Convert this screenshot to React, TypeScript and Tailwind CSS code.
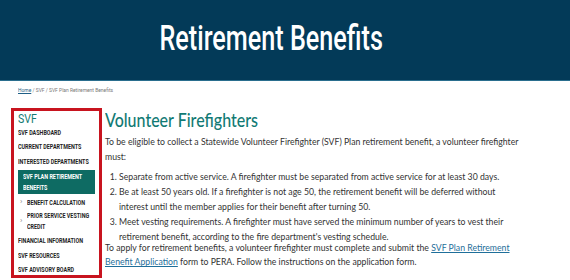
import React from "react";

function C({ children, s = "scale-x-[0.74]" }: { children: React.ReactNode; s?: string }) {
  return <span className={`inline-block origin-left whitespace-nowrap ${s}`}>{children}</span>;
}

function Chevron() {
  return <span className="text-[#8a8a8a] text-[8px] w-[7px] shrink-0 font-normal leading-none">›</span>;
}

export default function App() {
  return (
    <div className="w-[570px] h-[280px] overflow-hidden bg-white" style={{ fontFamily: 'Lato, "Liberation Sans", sans-serif' }}>
      <header className="h-[81px] bg-[#033a58] border-b border-[#2a6e8e] flex items-center justify-center">
        <h1 className="text-white text-[35px] leading-none font-medium scale-x-[0.72] -mt-[3px] ml-[-28px] whitespace-nowrap" style={{ fontFamily: 'Roboto, "Liberation Sans", sans-serif' }}>
          Retirement Benefits
        </h1>
      </header>
      <div className="px-[18px] pt-[5px] text-[5.8px] leading-[8px] text-[#777]" style={{ fontFamily: 'Roboto, "Liberation Sans", sans-serif' }}>
        <C s="scale-x-[0.85]"><span className="text-[#1f5f86] underline">Home</span> / SVF / SVF Plan Retirement Benefits</C>
      </div>
      <div className="flex pt-[14px] pl-[11px]">
        <aside className="w-[91px] h-[170px] shrink-0 border-[3px] border-[#c8141f] px-[3px] overflow-hidden" style={{ fontFamily: 'Roboto, "Liberation Sans", sans-serif' }}>
          <div className="text-[#137a73] text-[13.5px] leading-[14px] pl-[1px]"><C s="scale-x-[0.78]">SVF</C></div>
          <nav className="flex flex-col text-[7.3px] font-bold text-[#1e1e1e] uppercase leading-[11px]">
            <div className="h-[14.5px] flex items-center pl-[1px]"><C>SVF Dashboard</C></div>
            <div className="h-[14.5px] flex items-center pl-[1px]"><C>Current Departments</C></div>
            <div className="h-[14.5px] flex items-center pl-[1px]"><C>Interested Departments</C></div>
            <div className="h-[24px] mt-[1.5px] ml-[1px] mr-[1px] bg-[#0e6b63] text-white pl-[5px] flex flex-col justify-center">
              <C>SVF Plan Retirement</C>
              <C>Benefits</C>
            </div>
            <div className="h-[14px] mt-[1px] flex items-center pl-[3px]"><Chevron /><C>Benefit Calculation</C></div>
            <div className="h-[24px] flex items-center pl-[3px]"><Chevron />
              <div className="flex flex-col"><C>Prior Service Vesting</C><C>Credit</C></div>
            </div>
            <div className="h-[14.5px] mt-[0.5px] flex items-center pl-[1px]"><C>Financial Information</C></div>
            <div className="h-[14.5px] flex items-center pl-[1px]"><C>SVF Resources</C></div>
            <div className="h-[14.5px] flex items-center pl-[1px]"><C>SVF Advisory Board</C></div>
          </nav>
        </aside>
        <main className="w-[424px] pl-[3px] text-[#333] text-[8.7px] leading-[15px]">
          <h2 className="text-[#117a74] text-[20px] leading-[24px] font-medium -mt-[1px] mb-[3px]"><C s="scale-x-[0.8]">Volunteer Firefighters</C></h2>
          <p>To be eligible to collect a Statewide Volunteer Firefighter (SVF) Plan retirement benefit, a volunteer firefighter must:</p>
          <ol className="list-decimal pl-[14px] mt-[5px] mb-0">
            <li>Separate from active service. A firefighter must be separated from active service for at least 30 days.</li>
            <li>Be at least 50 years old. If a firefighter is not age 50, the retirement benefit will be deferred without interest until the member applies for their benefit after turning 50.</li>
            <li>Meet vesting requirements. A firefighter must have served the minimum number of years to vest their retirement benefit, according to the fire department's vesting schedule.</li>
          </ol>
          <p className="-mt-[3px] leading-[14px]">To apply for retirement benefits, a volunteer firefighter must complete and submit the <span className="text-[#1f6f9a] underline">SVF Plan Retirement Benefit Application</span> form to PERA. Follow the instructions on the application form.</p>
        </main>
      </div>
    </div>
  );
}
